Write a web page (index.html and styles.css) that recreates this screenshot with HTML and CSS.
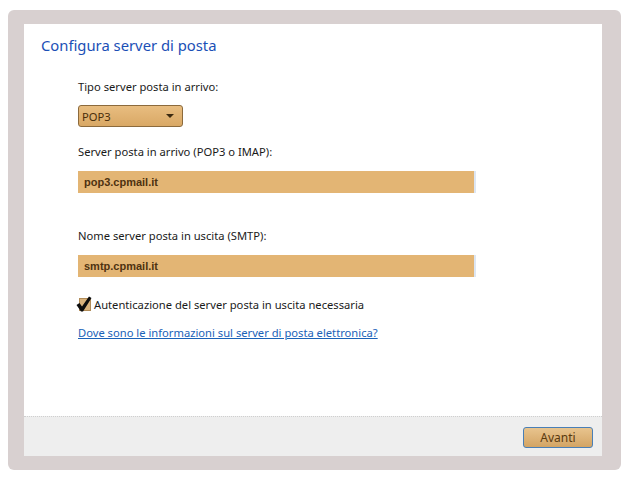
FILE: index.html
```html
<!DOCTYPE html>
<html lang="it">
<head>
    <meta charset="UTF-8">
    <title>Configura server di posta</title>
    <link rel="stylesheet" href="styles.css">
</head>
<body>
    <div class="frame">
        <div class="dialog">
            <div class="content">
                <h1>Configura server di posta</h1>
                <div class="form">
                    <label class="field-label">Tipo server posta in arrivo:</label>
                    <div class="select">
                        <span>POP3</span>
                        <span class="arrow"></span>
                    </div>
                    <label class="field-label">Server posta in arrivo (POP3 o IMAP):</label>
                    <div class="textbox">pop3.cpmail.it</div>
                    <label class="field-label second">Nome server posta in uscita (SMTP):</label>
                    <div class="textbox">smtp.cpmail.it</div>
                    <div class="check-row">
                        <svg class="check" width="16" height="16" viewBox="0 0 16 16">
                            <rect x="3.5" y="2.5" width="11" height="12" fill="#d9b27c" stroke="#b08b58"/>
                            <path d="M0.5 9 L3.5 7 L6 10.5 L13 0.5 L15.5 2 L7 15.5 L5 15.5 Z" fill="#0d0d0d"/>
                        </svg>
                        <span>Autenticazione del server posta in uscita necessaria</span>
                    </div>
                    <a class="help" href="#">Dove sono le informazioni sul server di posta elettronica?</a>
                </div>
            </div>
            <div class="footer">
                <button class="next">Avanti</button>
            </div>
        </div>
    </div>
</body>
</html>
```

FILE: styles.css
```css
body {
    margin: 0;
    background: #fff;
    font-family: "Noto Sans", "Open Sans", sans-serif;
    font-size: 11.2px;
    color: #1a1a1a;
}
.frame {
    margin: 10px 0 0 8px;
    width: 613px;
    height: 460px;
    box-sizing: border-box;
    padding: 14px 19px 14px 16px;
    background: #d8d0d0;
    border-radius: 6px;
}
.dialog {
    background: #fff;
    height: 432px;
    display: flex;
    flex-direction: column;
}
.content {
    height: 392px;
    box-sizing: border-box;
    padding: 11px 0 0 17px;
}
h1 {
    margin: 0;
    font-size: 14.8px;
    font-weight: normal;
    color: #1b4fb6;
}
.form {
    margin: 23px 0 0 37px;
    display: flex;
    flex-direction: column;
    align-items: flex-start;
}
.field-label {
    line-height: 18px;
}
.select {
    margin-top: 9px;
    width: 105px;
    height: 22px;
    box-sizing: border-box;
    border: 1px solid #8c6a3c;
    border-radius: 3px;
    background: linear-gradient(#e8bd80, #d9a865);
    display: flex;
    align-items: center;
    justify-content: space-between;
    padding: 0 8px 0 3px;
    color: #4a2e0a;
    margin-bottom: 16px;
}
.arrow {
    width: 0;
    height: 0;
    border-left: 4px solid transparent;
    border-right: 4px solid transparent;
    border-top: 4px solid #3d2a10;
}
.textbox {
    margin-top: 10px;
    width: 398px;
    height: 22px;
    box-sizing: border-box;
    background: #e3b574;
    border-right: 2px solid #dde6f2;
    padding: 0 6px;
    font-family: "Liberation Sans", Arial, sans-serif;
    font-weight: bold;
    font-size: 11px;
    line-height: 22px;
    color: #4e3210;
}
.second {
    margin-top: 34px;
}
.check-row {
    margin-top: 19px;
    margin-left: -2px;
    display: flex;
    align-items: center;
    gap: 2px;
}
.help {
    margin-top: 13px;
    color: #1a62b8;
    text-decoration: underline;
}
.footer {
    flex: 1;
    background: #eeeeee;
    border-top: 1px dotted #cfcfcf;
    display: flex;
    justify-content: flex-end;
    align-items: center;
    padding-right: 9px;
}
.next {
    width: 70px;
    height: 21px;
    border: 1px solid #4a7fb6;
    border-radius: 3px;
    background: linear-gradient(#e8c48e, #d3a464);
    font-family: "Noto Sans", "Open Sans", sans-serif;
    font-size: 12px;
    color: #5a3a10;
    padding: 0;
    margin-top: 1px;
}
```
